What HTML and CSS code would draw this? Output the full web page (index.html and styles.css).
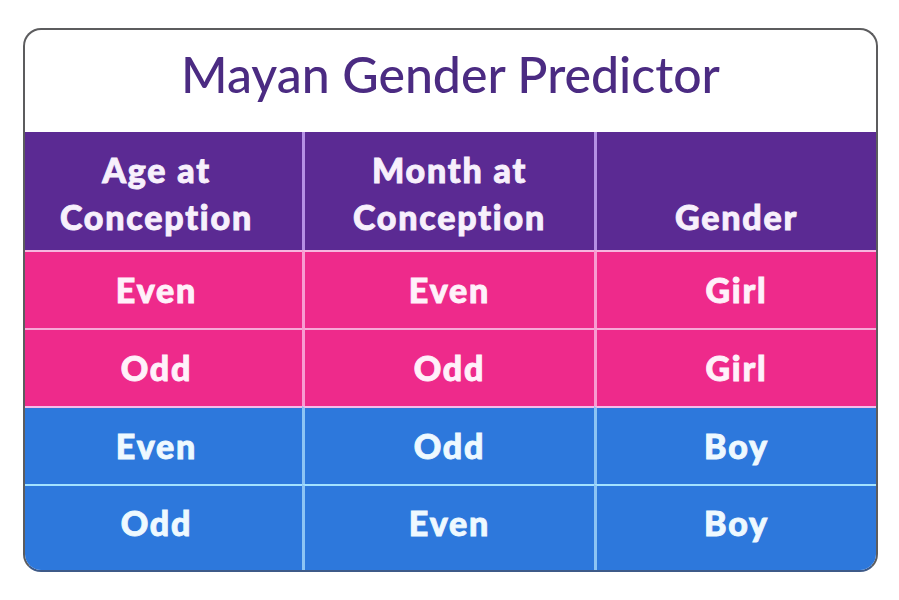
FILE: index.html
```html
<!DOCTYPE html>
<html lang="en">
<head>
<meta charset="utf-8">
<title>Mayan Gender Predictor</title>
<link rel="stylesheet" href="styles.css">
</head>
<body>
<div class="page">
  <div class="card">
    <div class="title">Mayan Gender Predictor</div>
    <div class="grid">
      <div class="cell head c1">Age at<br>Conception</div>
      <div class="cell head sep">Month at<br>Conception</div>
      <div class="cell head sep">Gender</div>

      <div class="cell pink first c1">Even</div>
      <div class="cell pink first sep">Even</div>
      <div class="cell pink first sep">Girl</div>

      <div class="cell pink c1">Odd</div>
      <div class="cell pink sep">Odd</div>
      <div class="cell pink sep">Girl</div>

      <div class="cell blue firstblue c1">Even</div>
      <div class="cell blue firstblue sep">Odd</div>
      <div class="cell blue firstblue sep">Boy</div>

      <div class="cell blue last c1">Odd</div>
      <div class="cell blue last sep">Even</div>
      <div class="cell blue last sep">Boy</div>
    </div>
  </div>
</div>
</body>
</html>
```

FILE: styles.css
```css
html, body {
  margin: 0;
  padding: 0;
  background: #ffffff;
}

.page {
  padding: 28px 0 0 23px;
  font-family: Lato, "Noto Sans", sans-serif;
}

.card {
  width: 855px;
  height: 544px;
  box-sizing: border-box;
  border: 2px solid #5c5c5e;
  border-bottom-color: #3e5a88;
  border-radius: 18px;
  overflow: hidden;
  background: #ffffff;
  display: flex;
  flex-direction: column;
}

.title {
  height: 102px;
  box-sizing: border-box;
  padding-top: 14px;
  text-align: center;
  font-size: 50px;
  line-height: 60px;
  font-weight: 500;
  color: #4b2b82;
}

.grid {
  flex: 1;
  display: grid;
  grid-template-columns: 277px 292px 282px;
  grid-template-rows: 118px 78px 78px 78px 1fr;
}

.cell {
  box-sizing: border-box;
  display: flex;
  align-items: center;
  justify-content: center;
  text-align: center;
  font-size: 34px;
  font-weight: 900;
  letter-spacing: 1.8px;
  -webkit-text-stroke: 0.9px currentColor;
  line-height: 38px;
  border-top: 2px solid transparent;
}

.c1 {
  padding-right: 14px;
}

.head {
  background: #5b2a93;
  color: #f7f0fc;
  align-items: flex-end;
  line-height: 47px;
  padding-bottom: 10px;
  border-top: 0;
}

.head.sep {
  border-left: 3px solid #b590e4;
}

.pink {
  background: #ee2a8b;
  color: #fff1fa;
  border-top-color: #f7a9d7;
}

.pink.sep {
  border-left: 3px solid #f89bd1;
}

.pink.first {
  border-top-color: #f6b6df;
}

.blue {
  background: #2d78dc;
  color: #eef9ff;
  border-top-color: #a3e2ff;
}

.blue.sep {
  border-left: 3px solid #8cc4f4;
}

.blue.firstblue {
  border-top-color: #f4bce8;
}

.last {
  align-items: flex-start;
  padding-top: 18px;
}
```
